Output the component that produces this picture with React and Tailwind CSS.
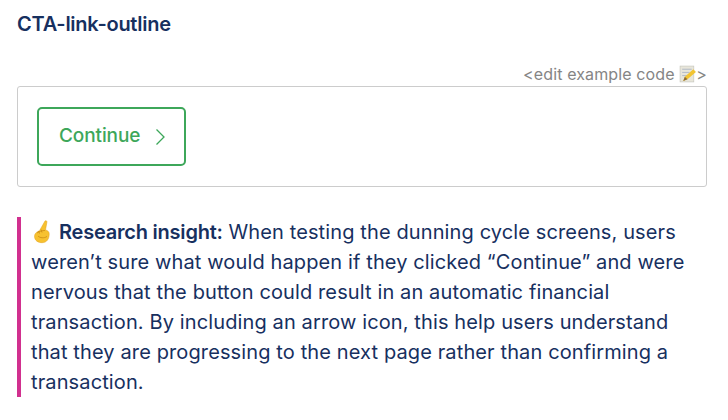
export default function App() {
  return (
    <div className="w-[728px] h-[420px] overflow-hidden bg-white pl-[17px] pr-[21px] font-['Inter',sans-serif] text-[#17305f]">
      <h2 className="pt-[12px] h-[67px] text-[20px] leading-[24px] font-semibold tracking-[-0.25px]">CTA-link-outline</h2>
      <div className="flex h-[14px] items-center justify-end text-[16px] leading-[14px] tracking-[0.12px] text-[#858585]">
        <span>&lt;edit example code&nbsp;</span>
        <svg className="mr-[-1px]" width="18" height="18" viewBox="0 0 17 17">
          <rect x="1" y="1" width="13" height="15" fill="#e8e6da" stroke="#c4c4bc" strokeWidth="0.6" />
          <path d="M3 4h9M3 7h7M3 10h5" stroke="#a9b2c4" strokeWidth="0.8" />
          <path d="M4 15l1.500-4 8-7 2.500 2.500-8 7z" fill="#f2c431" />
          <path d="M4 15l1.500-4 2.500 2.500z" fill="#8a6a3a" />
        </svg>
        <span>&gt;</span>
      </div>
      <div className="mt-[5px] h-[101px] rounded-[3px] border border-[#cccccc] px-[19px] pt-[20px]">
        <a className="flex h-[59px] w-[149px] items-center rounded-[5px] border-2 border-[#3da75a] pl-[20px] text-[19px] font-medium tracking-[-0.1px] text-[#3da75a]">
          Continue
          <svg className="ml-[15px]" width="11" height="18" viewBox="0 0 11 18" fill="none" stroke="#3da75a" strokeWidth="1.3">
            <path d="M1.500 1.500L9 9l-7.500 7.500" />
          </svg>
        </a>
      </div>
      <div className="mt-[30px] h-[180px] border-l-4 border-[#d1308f] pl-[10px] text-[20px] leading-[30px] tracking-[0.12px]">
        <svg className="mt-[-7px] mb-[-3px] ml-[2px] mr-[8px] inline-block align-middle" width="18" height="24" viewBox="0 0 18 24">
          <path d="M12 1c1-.6 2.200 0 1.900 1.300L12.500 10c2 .4 3.700 1.700 3.700 3.700 0 5.500-2.500 9-7.200 9-3.800 0-7.500-2-7.500-6.500 0-2.500 2-4.500 5-5.500z" fill="#f7c12f" stroke="#e0a01e" strokeWidth="0.5" />
          <path d="M4 13c2-1.500 5-2.500 8-2.500M5 16c2 2 6 2.500 9 .5M8 9.500l1 3M5.500 11l1 2.500" fill="none" stroke="#c98a14" strokeWidth="0.8" />
        </svg>
        <b className="font-semibold tracking-[-0.22px]">Research insight:</b> When testing the dunning cycle screens, users<br />
        weren’t sure what would happen if they clicked “Continue” and were<br />
        nervous that the button could result in an automatic financial<br />
        transaction. By including an arrow icon, this help users understand<br />
        that they are progressing to the next page rather than confirming a<br />
        transaction.
      </div>
    </div>
  );
}
